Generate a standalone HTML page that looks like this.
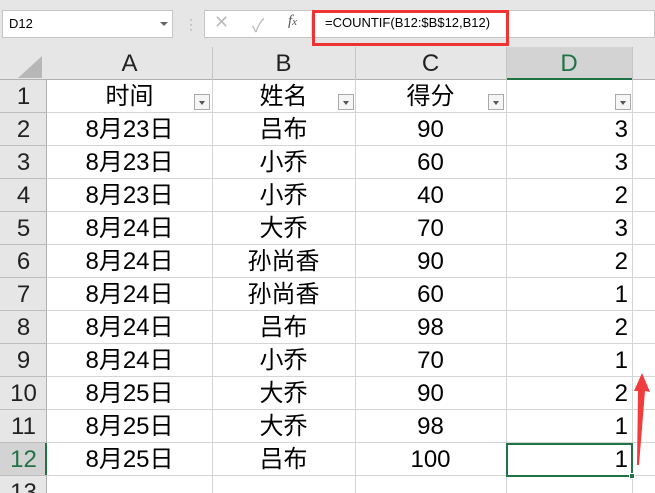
<!DOCTYPE html>
<html><head><meta charset="utf-8"><style>
*{margin:0;padding:0;box-sizing:border-box}
html,body{width:655px;height:493px;overflow:hidden}
body{background:#fff;position:relative;font-family:"Liberation Sans","Noto Sans CJK SC",sans-serif}
.a{position:absolute}
.c{position:absolute;font-size:24px;color:#000;line-height:33px;white-space:nowrap}
.h{position:absolute;font-size:24px;color:#222;text-align:center;line-height:33px}
.dd{position:absolute;width:16px;height:16px;border:1px solid #a9a9a9;background:#f5f5f5}
.dd:after{content:"";position:absolute;left:4px;top:6px;border-left:3px solid transparent;border-right:3px solid transparent;border-top:4px solid #555}
</style></head><body>
<div class="a" style="left:0;top:0;width:655px;height:47px;background:#e6e6e6"></div>
<div class="a" style="left:2px;top:10px;width:171px;height:28px;background:#fff;border:1px solid #c6c6c6;font-size:13px;line-height:26px;padding-left:6px">D12</div>
<div class="a" style="left:160px;top:22px;border-left:4px solid transparent;border-right:4px solid transparent;border-top:4px solid #666"></div>
<div class="a" style="left:189px;top:17px;color:#999;font-size:12px;line-height:5px">·<br>·<br>·</div>
<div class="a" style="left:204px;top:10px;width:451px;height:28px;background:#fff;border:1px solid #c6c6c6"></div>
<div class="a" style="left:214px;top:12px;color:#bbb;font-size:18px">✕</div>
<div class="a" style="left:252px;top:12px;color:#bbb;font-size:18px">✓</div>
<div class="a" style="left:288px;top:13px;color:#555;font-size:15px;font-style:italic;font-family:'Liberation Serif',serif">f<span style="font-size:11px">x</span></div>
<div class="a" style="left:311px;top:14px;width:1px;height:22px;background:#ddd"></div>
<div class="a" style="left:325px;top:14px;font-size:13px;line-height:18px">=COUNTIF(B12:$B$12,B12)</div>
<div class="a" style="left:312px;top:10px;width:197px;height:36px;border:3px solid #ee3333"></div>

<div class="a" style="left:0;top:47px;width:655px;height:33px;background:#e6e6e6;border-bottom:1px solid #b0b0b0"></div>
<div class="a" style="left:0;top:80px;width:47px;height:413px;background:#e6e6e6;border-right:1px solid #b0b0b0"></div>
<div class="a" style="left:18px;top:56px;width:0;height:0;border-left:24px solid transparent;border-bottom:22px solid #b7b7b7"></div>
<div class="a" style="left:506px;top:47px;width:126px;height:33px;background:#d3d3d3;border-bottom:2px solid #217346"></div>
<div class="a" style="left:0;top:443px;width:47px;height:33px;background:#d3d3d3;border-right:2px solid #217346"></div>
<div class="h" style="left:47px;top:47px;width:165px">A</div>
<div class="h" style="left:212px;top:47px;width:143px">B</div>
<div class="h" style="left:355px;top:47px;width:151px">C</div>
<div class="h" style="left:506px;top:47px;width:126px;color:#217346">D</div>
<div id="g"></div>
<div class="dd" style="left:194px;top:94px"></div>
<div class="dd" style="left:338px;top:94px"></div>
<div class="dd" style="left:488px;top:94px"></div>
<div class="dd" style="left:615px;top:94px"></div>
<div class="a" style="left:506px;top:443px;width:127px;height:34px;border:2px solid #217346"></div>
<div class="a" style="left:629px;top:473px;width:6px;height:6px;background:#217346;border:1px solid #fff"></div>
<svg class="a" style="left:0;top:0" width="655" height="493"><polygon points="642,373 650,392 645,391 639,465 637,465 638,391 634,391" fill="#f03c3c"/></svg>
<script>
var rows=[["时间","姓名","得分",""],["8月23日","吕布","90","3"],["8月23日","小乔","60","3"],["8月23日","小乔","40","2"],["8月24日","大乔","70","3"],["8月24日","孙尚香","90","2"],["8月24日","孙尚香","60","1"],["8月24日","吕布","98","2"],["8月24日","小乔","70","1"],["8月25日","大乔","90","2"],["8月25日","大乔","98","1"],["8月25日","吕布","100","1"]];
var h="";
for(var i=0;i<13;i++){var y=80+i*33;
h+='<div class="a" style="left:47px;top:'+(y+32)+'px;width:608px;height:1px;background:#d4d4d4"></div>';
h+='<div class="a" style="left:0;top:'+(y+32)+'px;width:47px;height:1px;background:#bdbdbd"></div>';
h+='<div class="h" style="left:0;top:'+y+'px;width:47px;'+(i==11?'color:#217346':'')+'">'+(i+1)+'</div>';
if(i<12){var r=rows[i];
h+='<div class="c" style="left:47px;top:'+y+'px;width:165px;text-align:center">'+r[0]+'</div>';
h+='<div class="c" style="left:212px;top:'+y+'px;width:143px;text-align:center">'+r[1]+'</div>';
h+='<div class="c" style="left:355px;top:'+y+'px;width:151px;text-align:center">'+r[2]+'</div>';
h+='<div class="c" style="left:506px;top:'+y+'px;width:122px;text-align:right">'+r[3]+'</div>';}}
[212,355,506,632].forEach(function(x){h+='<div class="a" style="left:'+x+'px;top:80px;width:1px;height:413px;background:#d4d4d4"></div>';h+='<div class="a" style="left:'+x+'px;top:47px;width:1px;height:33px;background:#c4c4c4"></div>';});
document.getElementById("g").innerHTML=h;
</script>
</body></html>
